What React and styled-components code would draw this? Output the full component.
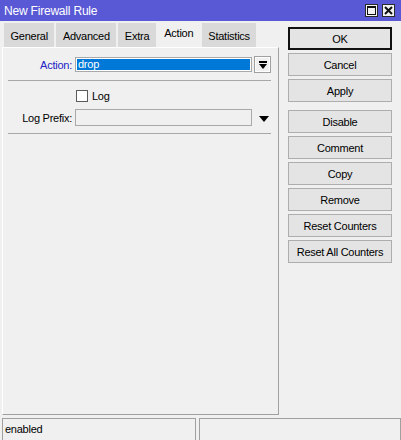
import React from "react";
import styled, { createGlobalStyle } from "styled-components";

const GlobalStyle = createGlobalStyle`
  html, body {
    margin: 0;
    padding: 0;
    background: #f0f0f0;
  }
  body {
    font-family: "Liberation Sans", Arial, sans-serif;
    font-size: 11px;
    letter-spacing: -0.25px;
    color: #000;
  }
`;

const tabs = ["General", "Advanced", "Extra", "Action", "Statistics"];
const buttons = [
  ["OK", "Cancel", "Apply"],
  ["Disable", "Comment", "Copy", "Remove", "Reset Counters", "Reset All Counters"],
];

export default function App() {
  return (
    <Window>
      <GlobalStyle />
      <TitleBar>
        <Title>New Firewall Rule</Title>
        <WinBtn>
          <svg width="9" height="9" viewBox="0 0 9 9">
            <rect x="0.5" y="0.5" width="8" height="8" fill="none" stroke="#111" />
            <rect x="0" y="0" width="9" height="2" fill="#111" />
          </svg>
        </WinBtn>
        <WinBtn>
          <svg width="9" height="9" viewBox="0 0 9 9">
            <path d="M1 1 L8 8 M8 1 L1 8" stroke="#111" strokeWidth="2" />
          </svg>
        </WinBtn>
      </TitleBar>

      <Body>
        <LeftPane>
          <TabBar>
            {tabs.map((t) => (
              <Tab key={t} $active={t === "Action"}>
                {t}
              </Tab>
            ))}
          </TabBar>
          <Panel>
            <Row>
              <Label $accent>Action:</Label>
              <Field $selected>drop</Field>
              <DropBtn>
                <svg width="8" height="8" viewBox="0 0 8 8">
                  <rect x="0" y="0" width="8" height="2" fill="#000" />
                  <polygon points="0,3 8,3 4,8" fill="#000" />
                </svg>
              </DropBtn>
            </Row>
            <Separator />
            <CheckRow>
              <CheckBox />
              <span>Log</span>
            </CheckRow>
            <Row>
              <Label>Log Prefix:</Label>
              <Field />
              <Arrow>
                <svg width="10" height="6" viewBox="0 0 10 6">
                  <polygon points="0,0 10,0 5,6" fill="#000" />
                </svg>
              </Arrow>
            </Row>
            <Separator />
          </Panel>
        </LeftPane>

        <RightPane>
          {buttons.map((group, i) => (
            <ButtonGroup key={i}>
              {group.map((b) => (
                <Button key={b} $default={b === "OK"}>
                  {b}
                </Button>
              ))}
            </ButtonGroup>
          ))}
        </RightPane>
      </Body>

      <StatusBar>
        <StatusCell $width="194px">enabled</StatusCell>
        <StatusCell />
      </StatusBar>
    </Window>
  );
}

const Window = styled.div`
  width: 401px;
  height: 440px;
  background: #f0f0f0;
  display: flex;
  flex-direction: column;
  overflow: hidden;
`;

const TitleBar = styled.div`
  height: 21px;
  flex: none;
  background: #5959d6;
  display: flex;
  align-items: center;
  padding: 0 6px 0 4px;
  gap: 4px;
`;

const Title = styled.span`
  flex: 1;
  color: #fff;
  font-size: 12px;
  letter-spacing: -0.2px;
`;

const WinBtn = styled.div`
  width: 11px;
  height: 11px;
  border: 1px solid #2a2a2a;
  background: #f2f2f2;
  display: flex;
  align-items: center;
  justify-content: center;
`;

const Body = styled.div`
  flex: 1;
  display: flex;
  padding: 1px 0 3px 2px;
  min-height: 0;
`;

const LeftPane = styled.div`
  width: 277px;
  display: flex;
  flex-direction: column;
`;

const TabBar = styled.div`
  display: flex;
  align-items: flex-end;
  height: 25px;
  padding-left: 2px;
  flex: none;
`;

const Tab = styled.div`
  height: ${(p) => (p.$active ? "25px" : "24px")};
  line-height: ${(p) => (p.$active ? "22px" : "26px")};
  padding: 0 ${(p) => (p.$active ? "7.5px" : "6.5px")};
  margin-right: ${(p) => (p.$active ? "1px" : "2px")};
  margin-left: ${(p) => (p.$active ? "-1px" : "0")};
  background: ${(p) => (p.$active ? "#f0f0f0" : "#d9d9d9")};
  white-space: nowrap;
`;

const Panel = styled.div`
  flex: 1;
  border-top: 1px solid #ffffff;
  border-left: 1px solid #ffffff;
  border-right: 1px solid #a0a0a0;
  border-bottom: 1px solid #a0a0a0;
  padding-top: 8px;
  display: flex;
  flex-direction: column;
`;

const Row = styled.div`
  display: flex;
  align-items: center;
  height: 17px;
`;

const Label = styled.span`
  width: 69px;
  margin-right: 3px;
  text-align: right;
  color: ${(p) => (p.$accent ? "#2222c4" : "#000")};
  white-space: nowrap;
`;

const Field = styled.div`
  width: 177px;
  height: ${(p) => (p.$selected ? "15px" : "17px")};
  box-sizing: border-box;
  border: 1px solid #a9a9a9;
  box-shadow: ${(p) => (p.$selected ? "inset 0 0 0 1px #ffffff" : "none")};
  background: ${(p) => (p.$selected ? "#0078d7" : "#f0f0f0")};
  color: #fff;
  padding-left: 2px;
  line-height: 13px;
`;

const DropBtn = styled.div`
  width: 17px;
  height: 17px;
  box-sizing: border-box;
  margin-left: 2px;
  border: 1px solid #a0a0a0;
  box-shadow: inset 0 0 0 1px #ffffff;
  background: #f0f0f0;
  display: flex;
  align-items: center;
  justify-content: center;
`;

const Arrow = styled.div`
  margin-left: 7px;
  display: flex;
  align-items: center;
  padding-top: 2px;
`;

const Separator = styled.div`
  height: 1px;
  background: #a8a8a8;
  margin: 7px 7px 0 5px;
`;

const CheckRow = styled.div`
  display: flex;
  align-items: center;
  gap: 4px;
  margin: 9px 0 7px 73px;
  height: 12px;
`;

const CheckBox = styled.div`
  width: 12px;
  height: 12px;
  box-sizing: border-box;
  border: 1px solid #5a5a5a;
  background: #fff;
`;

const RightPane = styled.div`
  margin-left: 9px;
  padding-top: 5px;
  width: 104px;
  display: flex;
  flex-direction: column;
  gap: 8px;
`;

const ButtonGroup = styled.div`
  display: flex;
  flex-direction: column;
  gap: 3px;
`;

const Button = styled.div`
  height: 23px;
  box-sizing: border-box;
  border: 1px solid ${(p) => (p.$default ? "#111" : "#adadad")};
  box-shadow: ${(p) => (p.$default ? "inset 0 0 0 1px #111" : "none")};
  background: #e4e4e4;
  display: flex;
  align-items: center;
  justify-content: center;
  white-space: nowrap;
`;

const StatusBar = styled.div`
  height: 22px;
  flex: none;
  display: flex;
  gap: 3px;
  padding-left: 2px;
`;

const StatusCell = styled.div`
  width: ${(p) => p.$width || "auto"};
  flex: ${(p) => (p.$width ? "none" : "1")};
  box-sizing: border-box;
  border-top: 1px solid #a0a0a0;
  border-left: 1px solid #a0a0a0;
  border-right: 1px solid #a0a0a0;
  padding: 4px 0 0 2px;
`;
